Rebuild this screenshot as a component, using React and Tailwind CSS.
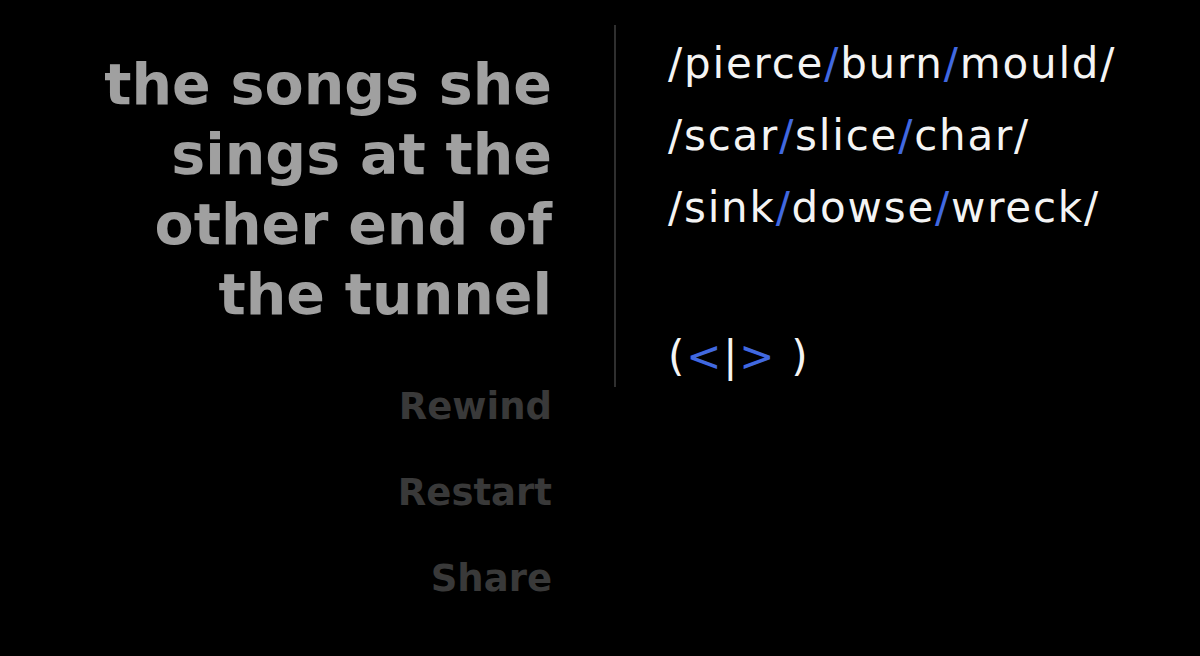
export default function App() {
  const blue = "text-[#4169e1]";
  const Slash = () => <span className={blue}>/</span>;
  return (
    <div className="w-[1200px] h-[656px] bg-black overflow-hidden flex">
      <div className="w-[552px] shrink-0 pt-[49px] text-right font-['DejaVu_Sans',sans-serif] font-bold">
        <div className="text-[57px] leading-[70px] text-[#a0a0a0]">
          <div>the songs she</div>
          <div>sings at the</div>
          <div>other end of</div>
          <div>the tunnel</div>
        </div>
        <div className="mt-[35px] text-[37px] leading-[86px] text-[#393939]">
          <div>Rewind</div>
          <div>Restart</div>
          <div>Share</div>
        </div>
      </div>
      <div className="ml-[62px] mt-[25px] h-[362px] border-l-2 border-[#2f2f2f] pl-[52px] font-['DejaVu_Sans',sans-serif] text-[42px] tracking-[1.8px] text-[#f4f4f4]">
        <div className="mt-[3px] leading-[72px]">
          <div>/pierce<Slash />burn<Slash />mould/</div>
          <div>/scar<Slash />slice<Slash />char/</div>
          <div>/sink<Slash />dowse<Slash />wreck/</div>
        </div>
        <div className="mt-[77px] leading-[72px]">
          (<span className={blue}>&lt;</span>|<span className={blue}>&gt;</span> )
        </div>
      </div>
    </div>
  );
}
